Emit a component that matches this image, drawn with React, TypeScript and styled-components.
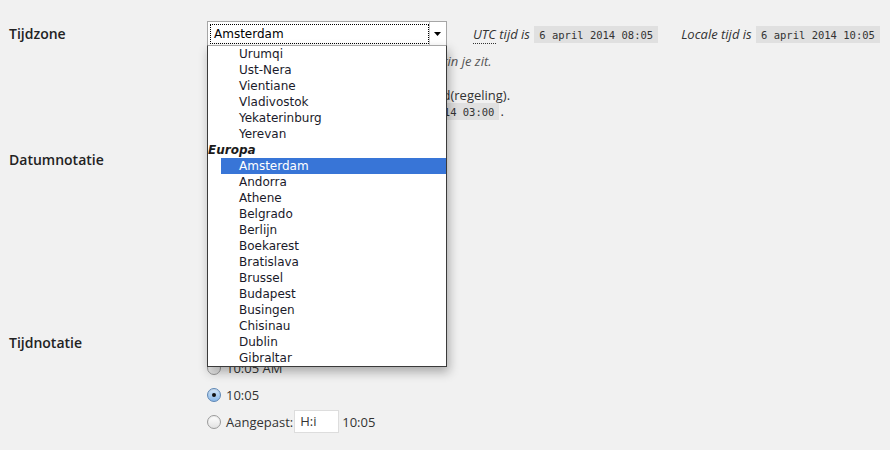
import React from 'react';
import styled, { createGlobalStyle } from 'styled-components';

const GlobalStyle = createGlobalStyle`
  html, body {
    margin: 0;
    padding: 0;
    background: #f1f1f1;
  }
  body {
    font-family: "Open Sans", "Noto Sans", sans-serif;
    font-size: 13px;
    color: #333;
  }
`;

const europe = [
  'Amsterdam', 'Andorra', 'Athene', 'Belgrado', 'Berlijn', 'Boekarest', 'Bratislava',
  'Brussel', 'Budapest', 'Busingen', 'Chisinau', 'Dublin', 'Gibraltar',
];
const asia = ['Urumqi', 'Ust-Nera', 'Vientiane', 'Vladivostok', 'Yekaterinburg', 'Yerevan'];

const dateFormats = ['6 april 2014', '2014/04/06', '04/06/2014', '06/04/2014'];
const timeFormats = ['10:05 am', '10:05 AM', '10:05'];

const App: React.FC = () => {
  return (
    <>
      <GlobalStyle />
      <Page>
        <Row $top={21} $bottom={15}>
          <Th $lh={26}>Tijdzone</Th>
          <Td>
            <SelectLine>
              <SelectWrap>
                <SelectBox>
                  <SelectValue>Amsterdam</SelectValue>
                  <SelectButton>
                    <svg width="7" height="4" viewBox="0 0 7 4">
                      <path d="M0 0h7L3.5 4z" fill="#000" />
                    </svg>
                  </SelectButton>
                </SelectBox>
                <DropList>
                  {asia.map((city) => (
                    <OptionItem key={city}>{city}</OptionItem>
                  ))}
                  <GroupLabel>Europa</GroupLabel>
                  {europe.map((city) => (
                    <OptionItem key={city} $selected={city === 'Amsterdam'}>
                      {city}
                    </OptionItem>
                  ))}
                </DropList>
              </SelectWrap>
              <TimeInfo $gap={26}>
                <Abbr>UTC</Abbr> tijd is <Code>6 april 2014 08:05</Code>
              </TimeInfo>
              <TimeInfo $gap={22}>
                Locale tijd is <Code>6 april 2014 10:05</Code>
              </TimeInfo>
            </SelectLine>
            <Description>Kies een stad in dezelfde tijdzone als waarin je zit.</Description>
            <DstInfo>
              Deze tijdzone is momenteel in zomertijd(regeling).
              <br />
              De zomertijd eindigt op: <Code>26 oktober 2014 03:00</Code>.
            </DstInfo>
          </Td>
        </Row>

        <Row $top={11} $bottom={46}>
          <Th $lh={27}>Datumnotatie</Th>
          <Td>
            {dateFormats.map((f, i) => (
              <RadioRow key={f}>
                <Radio $checked={i === 0} />
                <span>{f}</span>
              </RadioRow>
            ))}
            <RadioRow>
              <Radio />
              <span>Aangepast:</span>
              <SmallInput>j F Y</SmallInput>
              <span>6 april 2014</span>
            </RadioRow>
          </Td>
        </Row>

        <Row $top={0} $bottom={16}>
          <Th $lh={31}>Tijdnotatie</Th>
          <Td>
            {timeFormats.map((f) => (
              <RadioRow key={f}>
                <Radio $checked={f === '10:05'} />
                <span>{f}</span>
              </RadioRow>
            ))}
            <RadioRow>
              <Radio />
              <span>Aangepast:</span>
              <SmallInput>H:i</SmallInput>
              <span>10:05</span>
            </RadioRow>
          </Td>
        </Row>
      </Page>
    </>
  );
};

// Styled Components
const Page = styled.div`
  padding-left: 9px;
  width: 881px;
`;

const Row = styled.div<{ $top: number; $bottom: number }>`
  display: grid;
  grid-template-columns: 198px 1fr;
  padding-top: ${(p) => p.$top}px;
  padding-bottom: ${(p) => p.$bottom}px;
`;

const Th = styled.div<{ $lh: number }>`
  font-size: 14px;
  font-weight: 600;
  color: #222;
  line-height: ${(p) => p.$lh}px;
`;

const Td = styled.div`
  display: flex;
  flex-direction: column;
  white-space: nowrap;
`;

const SelectLine = styled.div`
  display: flex;
  align-items: center;
  height: 26px;
`;

const SelectWrap = styled.div`
  position: relative;
  width: 240px;
  height: 26px;
`;

const SelectBox = styled.div`
  box-sizing: border-box;
  display: flex;
  width: 240px;
  height: 26px;
  background: #fff;
  border: 1px solid #a6a6a6;
  padding: 2px 1px 2px 2px;
`;

const SelectValue = styled.div`
  flex: 1;
  box-sizing: border-box;
  border: 1px dotted #000;
  font-family: "DejaVu Sans", sans-serif;
  font-size: 12px;
  line-height: 18px;
  padding-left: 3px;
  color: #000;
`;

const SelectButton = styled.div`
  width: 15px;
  margin: -2px 0;
  border-left: 1px solid #c8c8c8;
  display: flex;
  align-items: center;
  justify-content: center;
`;

const DropList = styled.div`
  position: absolute;
  z-index: 10;
  top: 24px;
  left: 0;
  width: 240px;
  box-sizing: border-box;
  background: #fff;
  border: 1px solid #3a3a3a;
  border-top-color: #a6a6a6;
  box-shadow: 2px 5px 10px rgba(0, 0, 0, 0.3);
  font-family: "DejaVu Sans", sans-serif;
  font-size: 12px;
  color: #111;
`;

const OptionItem = styled.div<{ $selected?: boolean }>`
  height: 16px;
  line-height: 16px;
  margin-left: 13px;
  padding-left: 18px;
  white-space: nowrap;
  background: ${(p) => (p.$selected ? '#3875d7' : 'transparent')};
  color: ${(p) => (p.$selected ? '#fff' : '#1a1a2a')};
`;

const GroupLabel = styled.div`
  height: 16px;
  line-height: 16px;
  font-weight: bold;
  font-style: italic;
  color: #1a1a1a;
`;

const TimeInfo = styled.span<{ $gap: number }>`
  margin-left: ${(p) => p.$gap}px;
  font-style: italic;
  color: #333;
  white-space: nowrap;
`;

const Abbr = styled.span`
  border-bottom: 1px dotted #333;
`;

const Code = styled.code`
  font-family: "DejaVu Sans Mono", monospace;
  font-style: normal;
  font-size: 10.5px;
  background: rgba(0, 0, 0, 0.07);
  padding: 3px 5px 2px;
  margin: 0 1px;
  color: #333;
`;

const Description = styled.p`
  margin: 5px 0 0;
  line-height: 18px;
  font-style: italic;
  color: #555;
`;

const DstInfo = styled.p`
  margin: 17px 0 0;
  line-height: 16px;
  color: #333;
`;

const RadioRow = styled.label`
  display: flex;
  align-items: center;
  gap: 5px;
  height: 27px;
  color: #333;
`;

const Radio = styled.span<{ $checked?: boolean }>`
  position: relative;
  box-sizing: border-box;
  width: 14px;
  height: 14px;
  border-radius: 50%;
  border: 1px solid ${(p) => (p.$checked ? '#5d86b5' : '#9a9a9a')};
  background: ${(p) =>
    p.$checked ? 'linear-gradient(#d3e6f8, #8ab8e8)' : 'linear-gradient(#ffffff, #e2e2e2)'};
  box-shadow: inset 0 1px 1px rgba(0, 0, 0, 0.08);
  flex-shrink: 0;

  &::after {
    content: '';
    display: ${(p) => (p.$checked ? 'block' : 'none')};
    position: absolute;
    left: 50%;
    top: 50%;
    width: 4px;
    height: 4px;
    margin: -2px 0 0 -2px;
    border-radius: 50%;
    background: #111;
  }
`;

const SmallInput = styled.span`
  box-sizing: border-box;
  width: 45px;
  height: 23px;
  line-height: 21px;
  margin-left: -4px;
  margin-right: -2px;
  padding-left: 5px;
  background: #fff;
  border: 1px solid #ddd;
  color: #333;
`;

export default App;
